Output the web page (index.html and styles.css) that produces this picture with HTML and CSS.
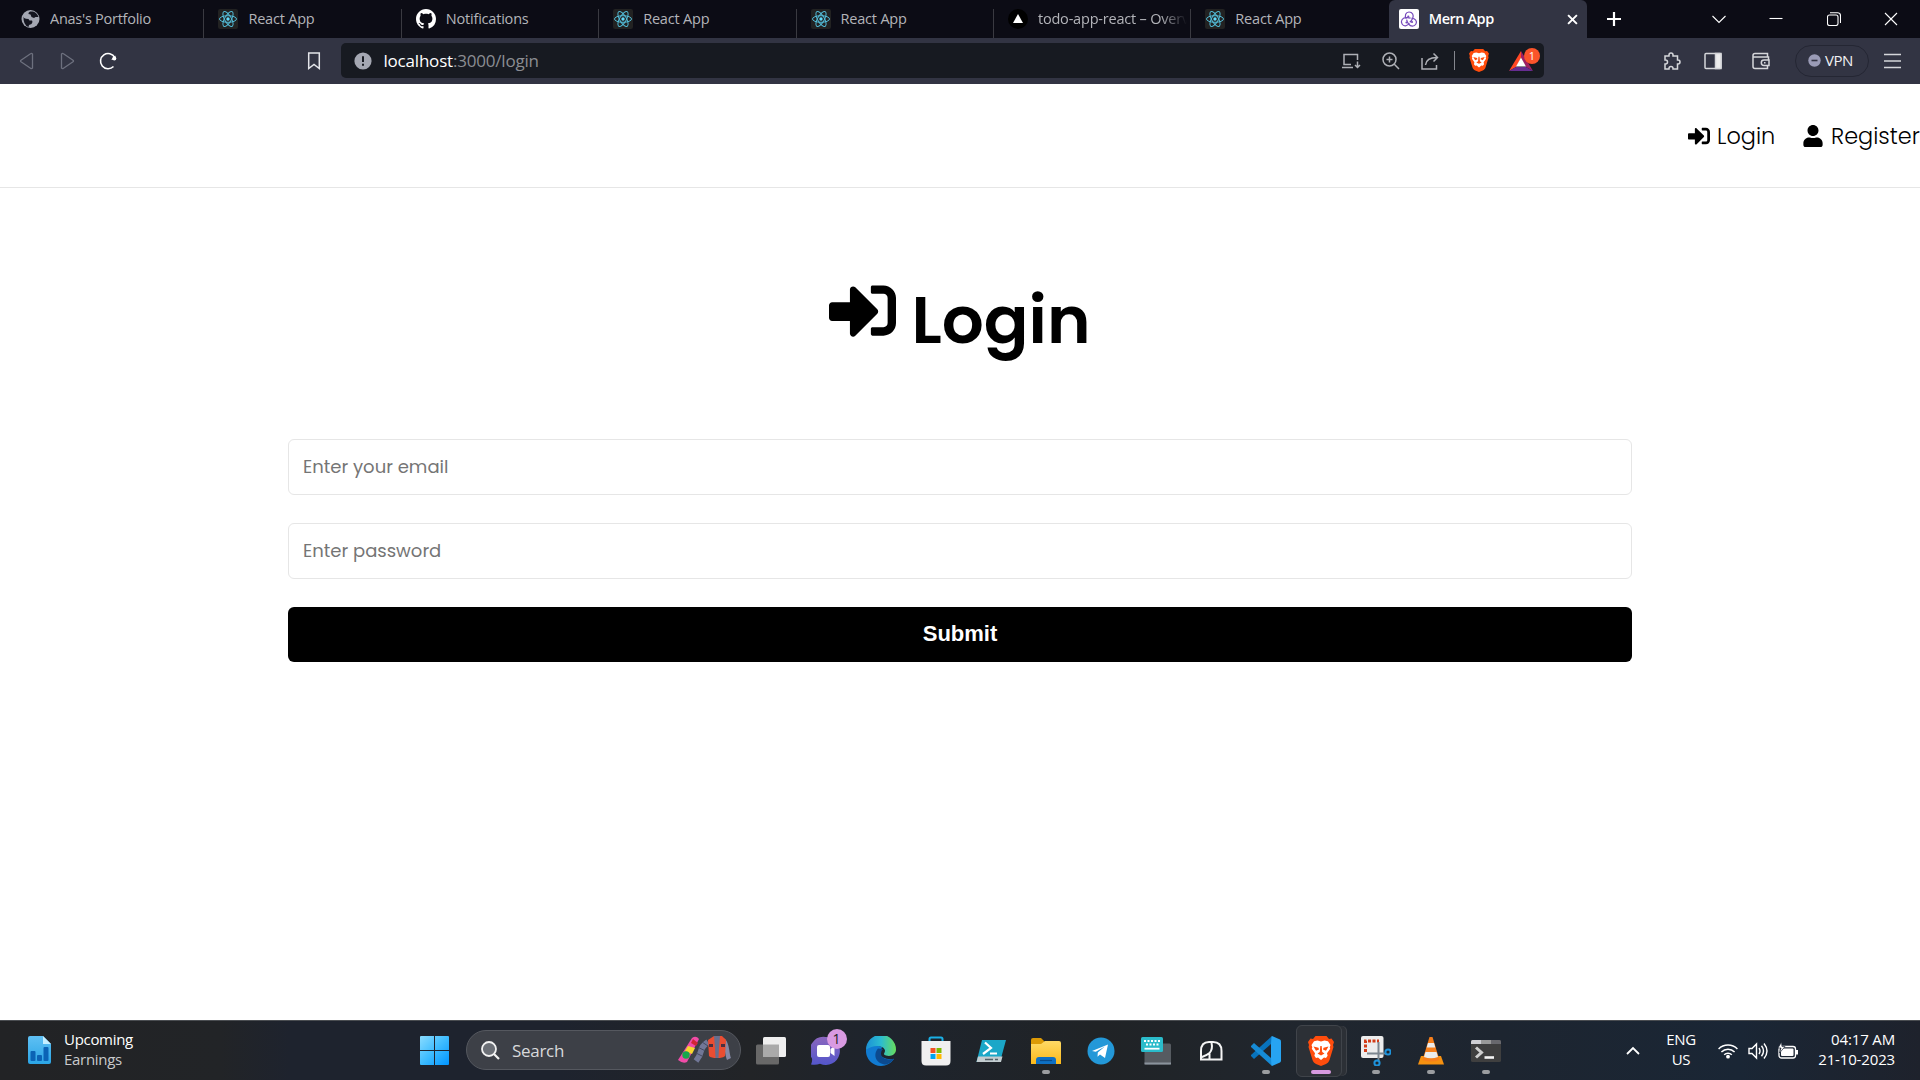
FILE: index.html
```html
<!DOCTYPE html>
<html lang="en">
<head>
<meta charset="utf-8">
<title>Mern App</title>
<link rel="stylesheet" href="styles.css">
</head>
<body>
<svg class="defs" width="0" height="0">
  <symbol id="react" viewBox="0 0 20 20">
    <rect width="20" height="20" rx="2" fill="#222"/>
    <g fill="none" stroke="#53bcd8" stroke-width="1"><ellipse cx="10" cy="10" rx="8.500" ry="3.300"/><ellipse cx="10" cy="10" rx="8.500" ry="3.300" transform="rotate(60 10 10)"/><ellipse cx="10" cy="10" rx="8.500" ry="3.300" transform="rotate(120 10 10)"/></g>
    <circle cx="10" cy="10" r="1.700" fill="#61dafb"/>
  </symbol>
  <symbol id="signin" viewBox="0 0 512 512"><path fill="currentColor" d="M416 448h-84c-6.600 0-12-5.400-12-12v-40c0-6.600 5.400-12 12-12h84c17.700 0 32-14.300 32-32V160c0-17.700-14.300-32-32-32h-84c-6.600 0-12-5.400-12-12V76c0-6.600 5.400-12 12-12h84c53 0 96 43 96 96v192c0 53-43 96-96 96zm-47-201L201 79c-15-15-41-4.500-41 17v96H24c-13.300 0-24 10.700-24 24v96c0 13.300 10.700 24 24 24h136v96c0 21.500 26 32 41 17l168-168c9.300-9.400 9.300-24.600 0-34z"/></symbol>
  <symbol id="brave" viewBox="0 0 26 30">
    <path fill="#ff4d0d" d="M7.500 0h11l2.500 3 2.500-.5L26 6l-1 3 .5 2-4 13c-.6 2-2 3-3.500 4l-5 2-5-2c-1.500-1-2.900-2-3.500-4L.5 11 1 9 0 6l2.500-3.500L5 3z"/>
    <path fill="#fff" d="M13 5.500l3.500-1 3.500.8L22.500 9l-.8 2.200.5 1.600-3.200 4.500.6 2.500-1.600 2.200-2-.6-3 2.600-3-2.600-2 .6-1.600-2.200.6-2.500-3.200-4.500.5-1.600L3.500 9 6 5.300l3.500-.8z"/>
    <path fill="#ff4d0d" d="M5.500 10.500l5 1.200.5 1.800-3 1.300zM20.500 10.500l-5 1.200-.5 1.800 3 1.300zM12.300 10h1.400l.5 6 2.300 1.500L13 19.400l-3.500-1.900 2.300-1.500z"/>
  </symbol>
</svg>

<header class="browser">
  <div class="tabstrip">
    <div class="tab"><svg class="favicon" viewBox="0 0 20 20"><circle cx="9.500" cy="10" r="9" fill="#a4a7b2"/><path d="M2.500 7.500q0 2 2.500 2.300l2.500.2 1 1.500h2.500l.5 1.500-1 2-2.500 1-.5 2Q2 16 2.500 7.500zM9 2.500q-2 1-1.500 2.500l2 .5 1 2.500 2.500 1 1.500-1h3Q16 3.500 12 2.500z" fill="#14151f"/></svg><span class="label">Anas's Portfolio</span></div>
    <div class="tab"><svg class="favicon"><use href="#react"/></svg><span class="label">React App</span></div>
    <div class="tab"><svg class="favicon" viewBox="0 0 16 16"><path fill="#fff" d="M8 0C3.580 0 0 3.580 0 8c0 3.540 2.290 6.530 5.470 7.590.4.070.55-.17.55-.38 0-.19-.01-.82-.01-1.490-2.010.37-2.530-.49-2.690-.94-.09-.23-.48-.94-.82-1.130-.28-.15-.68-.52-.01-.53.63-.01 1.080.58 1.230.82.72 1.210 1.870.87 2.330.66.07-.52.28-.87.51-1.070-1.780-.2-3.640-.89-3.640-3.950 0-.87.31-1.590.82-2.150-.08-.2-.36-1.020.08-2.120 0 0 .67-.21 2.200.82.64-.18 1.320-.27 2-.27s1.360.09 2 .27c1.530-1.040 2.200-.82 2.200-.82.44 1.100.16 1.920.08 2.120.51.56.82 1.270.82 2.150 0 3.070-1.870 3.750-3.650 3.950.29.25.54.73.54 1.480 0 1.070-.01 1.930-.01 2.200 0 .21.15.46.55.38A8.013 8.013 0 0016 8c0-4.420-3.580-8-8-8z"/></svg><span class="label">Notifications</span></div>
    <div class="tab"><svg class="favicon"><use href="#react"/></svg><span class="label">React App</span></div>
    <div class="tab"><svg class="favicon"><use href="#react"/></svg><span class="label">React App</span></div>
    <div class="tab"><svg class="favicon" viewBox="0 0 20 20"><circle cx="10" cy="10" r="10" fill="#000"/><path d="M10 5l5 9H5z" fill="#fff"/></svg><span class="label faded">todo-app-react – Overview</span></div>
    <div class="tab"><svg class="favicon"><use href="#react"/></svg><span class="label">React App</span></div>
    <div class="tab active"><svg class="favicon" viewBox="0 0 20 20"><rect width="20" height="20" rx="2" fill="#fff"/><g fill="none" stroke="#764abc" stroke-width="1.200"><path id="loop" d="M7.300 9.800C5.200 6.500 6.800 3 10 3c3.600 0 5 3.400 3.700 6.200-.8 1.900-1.600 3-2.900 4.100"/><use href="#loop" transform="rotate(120 10 11)"/><use href="#loop" transform="rotate(240 10 11)"/></g><g fill="#764abc"><circle cx="9.300" cy="7.500" r="1.100"/><circle cx="7.500" cy="13.500" r="1.100"/><circle cx="13" cy="13" r="1.100"/></g></svg><span class="label">Mern App</span><svg class="close" viewBox="0 0 10 10"><path d="M1 1l8 8M9 1l-8 8" stroke="#fff" stroke-width="1.800"/></svg></div>
    <svg class="newtab" viewBox="0 0 16 16"><path d="M8 1v14M1 8h14" stroke="#fff" stroke-width="2.200"/></svg>
    <div class="winctl">
      <svg width="14" height="14" viewBox="0 0 14 14"><path d="M.5 4L7 10.500 13.500 4"/></svg>
      <svg width="14" height="14" viewBox="0 0 14 14"><path d="M.5 6.500h13"/></svg>
      <svg width="14" height="14" viewBox="0 0 14 14"><rect x=".5" y="3" width="10.500" height="10.500" rx="2"/><path d="M3 .7h7.500q3 0 3 3V11"/></svg>
      <svg width="14" height="14" viewBox="0 0 14 14"><path d="M1 1l12 12M13 1L1 13"/></svg>
    </div>
  </div>

  <div class="toolbar">
    <div class="navbtns">
      <svg width="16" height="18" viewBox="0 0 16 18" stroke="#6d707e" stroke-width="1.300"><path d="M13.500 2v14q-1 1-2 .2L2 9.800q-1-.8 0-1.600L11.500 1.800q1-.8 2 .2z"/></svg>
      <svg width="16" height="18" viewBox="0 0 16 18" stroke="#6d707e" stroke-width="1.300"><path d="M2.500 2v14q1 1 2 .2L14 9.800q1-.8 0-1.600L4.500 1.800q-1-.8-2 .2z"/></svg>
      <svg width="20" height="20" viewBox="0 0 20 20" stroke="#fff" stroke-width="1.600"><path d="M14.500 15.500A7.600 7.600 0 1 1 15.800 6.500"/><path d="M16.500 4.500v4.300h-4.300z" fill="#fff" stroke="none"/><circle cx="15.300" cy="7.500" r="2" fill="#fff" stroke="none"/></svg>
    </div>
    <svg class="bookmark" width="14" height="18" viewBox="0 0 14 18"><path d="M1.700 1h10.600v15.500L7 12.500l-5.300 4z" fill="none" stroke="#e4e5ea" stroke-width="1.500"/></svg>
    <div class="urlbar">
      <svg class="info" width="18" height="18" viewBox="0 0 18 18"><circle cx="9" cy="9" r="8.600" fill="#a4a7b2"/><path d="M9 4.300v5.600M9 11.700v2.100" stroke="#171a21" stroke-width="2"/></svg>
      <span class="url"><b>localhost</b>:3000/login</span>
      <div class="urlicons">
        <svg width="20" height="18" viewBox="0 0 20 18"><path d="M10 12.500H3v-10h13.500V8M1 15.500h11M16.500 9.500v6M14 13l2.500 2.500L19 13"/></svg>
        <svg width="18" height="18" viewBox="0 0 18 18"><circle cx="7.500" cy="7.500" r="6.500"/><path d="M12.300 12.300L17 17M4.500 7.500h6M7.500 4.500v6"/></svg>
        <svg width="18" height="18" viewBox="0 0 18 18"><path d="M1 6v11h14.500v-4M4.500 13C5 8 8 5.500 16 5.500M12.500 1.500l4 4-4 4"/></svg>
      </div>
      <i class="sep"></i>
      <svg class="lion" width="20" height="23"><use href="#brave"/></svg>
      <div class="bat"><svg width="24" height="20" viewBox="0 0 24 20"><path d="M12 0L0 20l7-4 5-9z" fill="#ff4724"/><path d="M12 0l12 20-7-4-5-9z" fill="#9e1f63"/><path d="M0 20h24l-7-4H7z" fill="#662d91"/><path d="M12 6.500l5 9H7z" fill="#fff"/></svg><span class="badge">1</span></div>
    </div>
    <div class="tools">
      <svg width="18" height="18" viewBox="0 0 18 18"><path d="M2 4h4V3q0-2 2-2t2 2v1h4.500v4h.5q2 0 2 2t-2 2h-.5v5H10v-.5q0-2-2-2t-2 2v.5H2v-5h.5q2 0 2-2t-2-2H2z"/></svg>
      <svg width="18" height="18" viewBox="0 0 18 18"><rect x="1" y="1.500" width="16" height="15" rx="1"/><path d="M11.500 1.500H17v15h-5.500z" fill="#eee"/></svg>
      <svg width="18" height="18" viewBox="0 0 18 18"><path d="M15.500 5V1.500H3Q1 1.500 1 3.500v11q0 2 2 2h12.500v-3M1.500 5h15v3M17 8h-5q-2.700 0-2.700 2.700t2.700 2.700h5zM12 10.700h1.500"/></svg>
      <div class="vpn"><svg width="13" height="13" viewBox="0 0 13 13"><circle cx="6.500" cy="6.500" r="6.200" fill="#9a9bb6"/><path d="M3.500 6.500h6" stroke="#323443" stroke-width="1.600"/></svg><span>VPN</span></div>
      <svg class="menu" width="17" height="16" viewBox="0 0 17 16"><path d="M0 1.500h17M0 8h17M0 14.500h17"/></svg>
    </div>
  </div>
</header>

<main class="page">
  <nav class="nav">
    <a class="navlink"><svg width="22" height="22"><use href="#signin"/></svg><span class="t-login">Login</span></a>
    <a class="navlink"><svg width="20" height="22" viewBox="0 0 448 512"><path d="M224 256c70.700 0 128-57.300 128-128S294.700 0 224 0 96 57.300 96 128s57.300 128 128 128zm89.600 32h-16.700c-22.200 10.200-46.900 16-72.900 16s-50.600-5.800-72.900-16h-16.700C60.200 288 0 348.200 0 422.400V464c0 26.500 21.500 48 48 48h352c26.500 0 48-21.500 48-48v-41.600c0-74.200-60.200-134.400-134.400-134.400z"/></svg><span class="t-reg">Register</span></a>
  </nav>
  <h1 class="title"><svg width="67" height="67"><use href="#signin"/></svg><span>Login</span></h1>
  <form class="form">
    <input class="field" type="email" placeholder="Enter your email">
    <input class="field pw" type="password" placeholder="Enter password">
    <button class="submit" type="button">Submit</button>
  </form>
</main>

<footer class="taskbar">
  <div class="widget">
    <svg width="23" height="28" viewBox="0 0 23 28"><defs><linearGradient id="doc" x2="0" y2="1"><stop stop-color="#5fc0f4"/><stop offset="1" stop-color="#2ba5e6"/></linearGradient></defs><path d="M2 0h13l8 8v18q0 2-2 2H2q-2 0-2-2V2Q0 0 2 0z" fill="url(#doc)"/><path d="M15 0l8 8h-8z" fill="#c5efff"/><g fill="#0b63b5"><rect x="2.500" y="15" width="5" height="10" rx="1"/><rect x="9" y="19" width="5" height="6" rx="1"/><rect x="15.500" y="11" width="5" height="14" rx="1"/></g></svg>
    <div class="wtext"><span>Upcoming</span><span class="dim">Earnings</span></div>
  </div>
  <svg class="start" width="29" height="29" viewBox="0 0 29 29"><defs><linearGradient id="win" x2="1" y2="1"><stop stop-color="#8adcff"/><stop offset=".5" stop-color="#3ebcff"/><stop offset="1" stop-color="#0094ff"/></linearGradient></defs><path fill="url(#win)" d="M0 1q0-1 1-1h13v14H0zM15 0h13q1 0 1 1v13H15zM0 15h14v14H1q-1 0-1-1zM15 15h14v13q0 1-1 1H15z"/></svg>
  <div class="search">
    <svg width="19" height="19" viewBox="0 0 19 19"><circle cx="8" cy="8" r="7" fill="#6b6f76" stroke="#f2f2f2" stroke-width="1.800"/><path d="M13 13l5 5" stroke="#f2f2f2" stroke-width="2.200"/></svg>
    <span>Search</span>
    <svg class="promo" width="53" height="28" viewBox="0 0 53 28">
      <path d="M14 2q4-3 7 1L9 26q-4 2-9-2z" fill="#f04ca8"/><path d="M15 3l5 4-2 3-5-3z" fill="#d12634"/><path d="M10 10l7 2-3 6-7-3z" fill="#f8d72e"/><circle cx="8" cy="19" r="3.700" fill="#18a84b"/>
      <path d="M30 6q-6 4-7 9t-5 10" fill="none" stroke="#717797" stroke-width="6"/><path d="M24 6l6 4M20.500 11.500l6 3M18 17l6 3" stroke="#454961" stroke-width="1"/><path d="M45 4q3 3 4 10t2 9" stroke="#8588a6" stroke-width="4.500" fill="none"/>
      <path d="M30 4l6-4h8l4 4-1 16q-2 2-8 2t-8-2z" fill="#e94d32"/><path d="M36 0h6l-1 12-.5 10h-3L37 12z" fill="#686e8d"/><path d="M31 8h4v3h-4zM43 8h4v3h-4z" fill="#4a3041"/>
    </svg>
  </div>
  <div class="apps">
    <div class="app"><svg viewBox="0 0 30 30"><rect y="8.500" width="23" height="20" rx="1.500" fill="#686868"/><rect x="7" y="1" width="23" height="20" rx="1.500" fill="#efefef"/><path d="M7 8.500h16V21H7z" fill="#aaa"/></svg></div>
    <div class="app"><svg viewBox="0 0 30 30"><defs><linearGradient id="chat" x2="0" y2="1"><stop stop-color="#8b66bd"/><stop offset="1" stop-color="#5356cb"/></linearGradient></defs><path fill="url(#chat)" d="M15 1a14 14 0 1 1-6 26.700Q5 29.500 0 28.500q1.500-3 1-6A14 14 0 0 1 15 1z"/><rect x="6" y="9" width="13" height="12" rx="2" fill="#fff"/><path d="M19.500 13l4-3v10l-4-3z" fill="#fff"/></svg><span class="count">1</span></div>
    <div class="app"><svg viewBox="0 0 30 30"><defs><linearGradient id="edge"><stop stop-color="#1b91d6"/><stop offset=".5" stop-color="#2cbcd0"/><stop offset="1" stop-color="#68dd5c"/></linearGradient></defs><path d="M0 14q3-6 10-5l6 2-2 6q1 7 14 6-5 7-13 7A15 15 0 0 1 0 14z" fill="#117bd2"/><path d="M0 14A15 15 0 0 1 30 13.500c0 5-5 7.500-10 6-4-1.200-1-2-1-5C18 9 7 8 0 14z" fill="url(#edge)"/><path d="M12 12.500c-6 7-1 16 8 16 4-1 7-4 8-6-6 2.500-13 0-13-5q0-3 2-4.500z" fill="#0c4a8f"/></svg></div>
    <div class="app"><svg viewBox="0 0 30 30"><path d="M8.500 6V3q0-1.500 1.500-1.500h10q1.500 0 1.500 1.500v3" fill="none" stroke="#1ab0e6" stroke-width="2"/><path d="M.5 5h29v20q0 4.500-4.500 4.500H5Q.5 29.500.5 25z" fill="#f0f0f0"/><path d="M9.500 12h5v5h-5z" fill="#f25022"/><path d="M15.500 12h5v5h-5z" fill="#7fba00"/><path d="M9.500 18h5v5h-5z" fill="#00a4ef"/><path d="M15.500 18h5v5h-5z" fill="#ffb900"/></svg></div>
    <div class="app"><svg viewBox="0 0 30 30"><path d="M6 4h24l-6 22H.5z" fill="#1ba7c8"/><path d="M2 20.500h24.500L25 26H.5z" fill="#c3cdd0"/><path d="M9 6.500l6 5.500-8 6M14 17.500h7" fill="none" stroke="#fff" stroke-width="2.200"/><path d="M9 23.500h8M19 23.500h3" stroke="#526068" stroke-width="1.300"/></svg></div>
    <div class="app run"><svg viewBox="0 0 30 30"><defs><linearGradient id="fold" x2="0" y2="1"><stop stop-color="#ffda66"/><stop offset="1" stop-color="#fbb91a"/></linearGradient></defs><path d="M0 4q0-2 2-2h8l4 4v5H0z" fill="#dc9a06"/><path d="M0 8h10l4-3h14q2 0 2 2v21H0z" fill="url(#fold)"/><path d="M5 28v-4q0-3 3-3h14q3 0 3 3v4z" fill="#0e70c4"/><path d="M9 24.500h12" stroke="#084a8b" stroke-width="1.200"/></svg></div>
    <div class="app"><svg viewBox="0 0 30 30"><circle cx="15" cy="15" r="13.500" fill="#2398d8"/><path d="M6 15l16-6.500-3 13.500-5-3.500-2.500 2.200.3-4.200 7-6-9 5.300z" fill="#fff"/></svg></div>
    <div class="app"><svg viewBox="0 0 30 30"><rect x="3.500" y="7.500" width="26.500" height="21" rx="1.500" fill="#565b61"/><path d="M3.500 26.500H30v2H3.500z" fill="#8a939c"/><rect y="1" width="22" height="15" rx="1.500" fill="#2bbccb"/><path d="M3 5h16M5 8.500h13" stroke="#fff" stroke-width="1.800" stroke-dasharray="2 1.500"/><path d="M3.500 12.700h15" stroke="#fff" stroke-width="1.800"/></svg></div>
    <div class="app"><svg viewBox="0 0 30 30"><path d="M5 23.500V15Q5 6 13 6h4q8.500 0 8.500 9v8.500zM15.500 6.500q1.500 7-2 10.500-3 2.500-7.500 4M13.500 17v6" fill="none" stroke="#f5f5f5" stroke-width="2"/></svg></div>
    <div class="app run"><svg viewBox="0 0 30 30"><path d="M21 0l8 3.500q1 .5 1 2v19q0 1.500-1 2L21 30l-1-1V1z" fill="#27a4f2"/><path d="M20 8L3 23l-3-3v-1L20.500.5z" fill="#0873bd"/><path d="M20 22L3 7 0 10v1l20.500 18.500z" fill="#168bd6"/></svg></div>
    <div class="app run current"><svg viewBox="0 0 26 30"><use href="#brave"/></svg></div>
    <div class="app run"><svg viewBox="0 0 30 30"><rect width="22.500" height="22" rx="2" fill="#ededed"/><path d="M4.500 16V5H18" fill="none" stroke="#d33c18" stroke-width="3" stroke-dasharray="3 1.500"/><path d="M17.500 6v19M6 17.500h19" stroke="#7d8790" stroke-width="2"/><g fill="none" stroke="#1e93dc" stroke-width="2"><circle cx="27" cy="16" r="2.600"/><circle cx="16" cy="27" r="2.600"/></g></svg></div>
    <div class="app run"><svg viewBox="0 0 30 30"><path d="M5 20h20l3 8.500H2z" fill="#f69110"/><path d="M13.500 1h3l7 23q-8 3-17 0z" fill="#f77f1b"/><path d="M12 7h6l1.300 4.500h-8.600zM9.500 16h11l1.500 5q-7 2.500-14 0z" fill="#ececec"/></svg></div>
    <div class="app run"><svg viewBox="0 0 30 30"><rect y="4" width="30" height="22" rx="1.500" fill="#3f3f3f"/><path d="M0 8V5.500Q0 4 1.500 4H20v4z" fill="#cfcfd4"/><path d="M10 4h10v4H10z" fill="#999"/><path d="M20 4h8.500Q30 4 30 5.500V8H20z" fill="#68686d"/><path d="M5 11.500l5.500 5-5.500 5" fill="none" stroke="#cfcfcf" stroke-width="3"/><path d="M13.500 21.500h9.500" stroke="#f5f5f5" stroke-width="2.600"/></svg></div>
  </div>
  <div class="tray">
    <svg class="up" width="14" height="9" viewBox="0 0 14 9"><path d="M1 8l6-6 6 6" fill="none" stroke="#fff" stroke-width="1.800"/></svg>
    <div class="lang"><span>ENG</span><span>US</span></div>
    <div class="status">
      <svg width="20" height="16" viewBox="0 0 20 16"><g fill="none" stroke="#fff" stroke-width="1.500"><path d="M.6 6a13.300 13.300 0 0 1 18.800 0M3.400 9a9.300 9.300 0 0 1 13.200 0M6.200 11.700a5.400 5.400 0 0 1 7.600 0"/></g><circle cx="10" cy="13.700" r="1.900" fill="#fff"/></svg>
      <svg width="20" height="18" viewBox="0 0 20 18"><path d="M1 6.500h3L8.500 2v14L4 11.500H1zM11 6q2 3 0 6M13.500 3.800q4 5.200 0 10.400M16 1.500q6 7.500 0 15" fill="none" stroke="#fff" stroke-width="1.400"/></svg>
      <svg width="20" height="17" viewBox="0 0 20 17"><rect x="1" y="4.500" width="16.500" height="11.500" rx="2.500" fill="none" stroke="#fff" stroke-width="1.300"/><rect x="3" y="6.500" width="12.500" height="7.500" rx="1" fill="#fff"/><path d="M18 8h2v4.500h-2z" fill="#fff"/><path d="M3.500 0L0 6h3l-1.500 5L7 4.500H4z" fill="#fff" stroke="#1d2735" stroke-width=".7"/></svg>
    </div>
    <div class="clock"><span>04:17 AM</span><span>21-10-2023</span></div>
  </div>
</footer>
</body>
</html>
```
FILE: styles.css
```css
* { box-sizing: border-box; }
body { margin: 0; width: 1920px; height: 1080px; overflow: hidden; display: flex; flex-direction: column; background: #fff; font-family: "Open Sans", "Noto Sans", sans-serif; }
svg { display: block; flex: none; }
.defs { position: absolute; }

/* browser chrome */
.browser { flex: none; height: 84px; background: #323443; }
.tabstrip { height: 38px; background: #0c0c15; display: flex; align-items: center; padding-left: 7px; }
.tab { width: 197.400px; height: 38px; display: flex; align-items: center; gap: 10px; padding: 0 4px 0 14px; color: #b3b4b9; font-size: 14.500px; letter-spacing: -0.200px; background: linear-gradient(#3a3a41, #3a3a41) right bottom / 1px 29px no-repeat; }
.tab:first-child { gap: 9px; letter-spacing: -0.260px; }
.tab.active { background: #323443; border-radius: 6px 6px 0 0; color: #fff; font-weight: 600; padding: 0 9px 0 10px; width: 198px; letter-spacing: -0.450px; }
.tab:nth-child(7) { background: none; }
.favicon { width: 20px; height: 20px; }
.label { flex: 1; min-width: 0; overflow: hidden; white-space: nowrap; line-height: 24px; }
.faded { -webkit-mask-image: linear-gradient(90deg, #000 82%, transparent); mask-image: linear-gradient(90deg, #000 82%, transparent); }
.close { width: 11px; height: 11px; }
.newtab { width: 16px; height: 16px; margin-left: 19px; }
.winctl { margin-left: auto; display: flex; gap: 43.500px; padding-right: 22px; }
.winctl svg { fill: none; stroke: #fff; stroke-width: 1.100; }

.toolbar { height: 46px; display: flex; align-items: center; padding-bottom: 1px; }
.navbtns { display: flex; align-items: center; gap: 24px; width: 307px; padding-left: 19px; }
.navbtns svg { fill: none; }
.urlbar { margin-left: 20px; width: 1203px; height: 35px; background: #171a21; border-radius: 5px; display: flex; align-items: center; padding: 0 4px 0 13px; }
.url { margin-left: 11.500px; flex: 1; font-size: 17px; letter-spacing: -0.200px; color: #8b8d92; line-height: 24px; }
.url b { color: #fff; font-weight: 400; }
.urlicons { display: flex; gap: 21px; }
.urlicons svg, .tools > svg { fill: none; stroke: #d5d6da; stroke-width: 1.500; }
.urlicons svg { stroke: #aeb0b6; }
.sep { width: 1px; height: 19px; background: #85878e; margin: 0 14px 0 15px; }
.bat { position: relative; margin: 0 7px 0 20px; }
.badge { position: absolute; left: 15px; top: -3px; width: 16px; height: 16px; border-radius: 50%; background: #fb542b; color: #fff; font-size: 11px; line-height: 16px; text-align: center; }
.tools { display: flex; align-items: center; margin-left: 119px; gap: 23px; }
.tools > svg:nth-child(3) { margin-left: 7px; }
.vpn { width: 74px; height: 32px; border: 1.500px solid #242633; border-radius: 16px; display: flex; align-items: center; gap: 4px; padding-left: 12px; color: #f1f1f4; font-size: 15px; line-height: 20px; letter-spacing: -0.500px; margin-left: 2px; }
.vpn span { padding-bottom: 2px; }
.menu { margin-left: -8px; }

/* web page */
.page { flex: 1; background: #fff; font-family: Poppins, Inter, sans-serif; color: #000; }
.nav { height: 104px; border-bottom: 1px solid #e6e6e6; display: flex; justify-content: flex-end; align-items: center; gap: 29px; }
.navlink { display: flex; align-items: center; gap: 7px; font-size: 22.400px; font-weight: 300; }
.t-login { width: 57px; }
.t-reg { width: 89px; margin-left: 1px; }
.title { margin: 77px 0 0; height: 110px; display: flex; justify-content: center; align-items: center; gap: 15px; font-size: 66px; font-weight: 600; line-height: 110px; }
.title svg { margin-top: -19px; }
.form { width: 1344px; margin: 64px auto 0; display: flex; flex-direction: column; gap: 28px; }
.field { height: 56px; border: 1px solid #e6e6e6; border-radius: 6px; padding: 0 14px 2px; font: 400 18px/24px Poppins, Inter, sans-serif; background: #fff; outline: 0; }
.field::placeholder { color: #757575; opacity: 1; }
.submit { height: 55px; border: 0; border-radius: 6px; background: #000; color: #fff; font: 700 22px "Liberation Sans", Arial, sans-serif; padding: 0 0 2px; }

/* desktop taskbar */
.taskbar { flex: none; height: 60px; border-top: 1px solid #4a4d51; background: linear-gradient(90deg, #222325 0, #222427 220px, #1e232e 290px, #1e232e 560px, #222427 750px, #1e242d 880px, #202326 1100px, #20262e 1300px, #1d2530 1500px, #1a2635 1740px, #1e222c 1920px); display: flex; align-items: center; color: #fff; font-size: 15px; }
.widget { width: 420px; padding-left: 28px; display: flex; align-items: center; gap: 13px; }
.widget svg { margin-top: -2px; }
.wtext, .lang, .clock { display: flex; flex-direction: column; line-height: 20px; letter-spacing: -0.300px; padding-bottom: 3px; }
.dim { color: #c9cacc; }
.search { margin-left: 17px; width: 275px; height: 40px; border: 1px solid #55585f; border-radius: 20px; background: #3d4047; display: flex; align-items: center; padding: 0 9px 0 14px; gap: 12px; color: #d8d9db; font-size: 17px; letter-spacing: -0.300px; margin-bottom: 1px; }
.promo { margin-left: auto; }
.apps { display: flex; margin-left: 2.500px; height: 59px; }
.app { width: 55px; position: relative; display: flex; justify-content: center; align-items: center; }
.app svg { width: 30px; height: 30px; position: relative; }
.run::after { content: ""; position: absolute; bottom: 6px; left: 23.500px; width: 8px; height: 4px; border-radius: 2px; background: #9b9da0; }
.current::before { content: ""; position: absolute; left: 2px; top: 4px; width: 44px; height: 50px; border: 1px solid #40444a; border-radius: 6px; background: #2c3036; box-shadow: 5px 0 0 -1px #2c3036, 6px 0 0 -1px #40444a; }
.current::after { width: 20px; left: 17.500px; background: #d79ae0; }
.count { position: absolute; left: 28px; top: 8px; width: 20px; height: 20px; border-radius: 50%; background: #d99ae2; color: #222; font-size: 14px; line-height: 20px; text-align: center; }
.tray { margin-left: auto; display: flex; align-items: center; padding-right: 25px; }
.lang { width: 28px; margin: 0 23px 0 27px; align-items: center; }
.status { display: flex; align-items: center; gap: 10px; }
.clock { width: 97px; align-items: flex-end; letter-spacing: -0.150px; }
```
